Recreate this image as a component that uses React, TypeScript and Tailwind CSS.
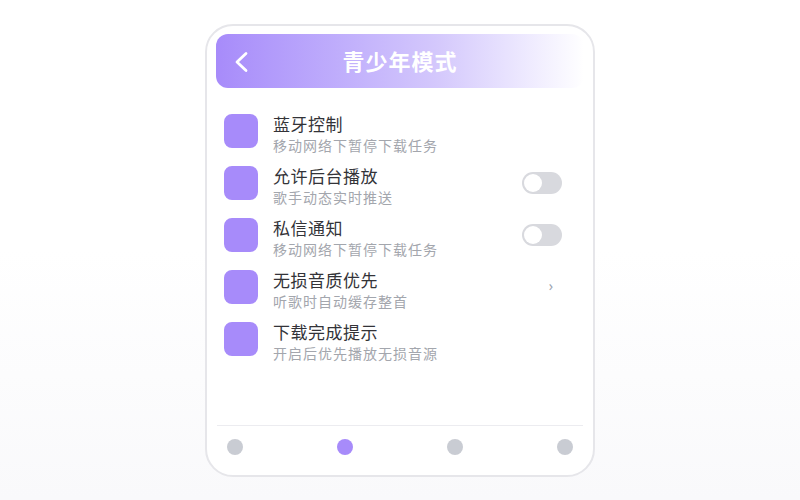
import React from "react";

const rows = [
  { t: "蓝牙控制", s: "移动网络下暂停下载任务", r: "none" },
  { t: "允许后台播放", s: "歌手动态实时推送", r: "toggle" },
  { t: "私信通知", s: "移动网络下暂停下载任务", r: "toggle" },
  { t: "无损音质优先", s: "听歌时自动缓存整首", r: "chevron" },
  { t: "下载完成提示", s: "开启后优先播放无损音源", r: "none" },
];

export default function App() {
  return (
    <div
      className="w-[800px] h-[500px] flex items-start justify-center pt-[24px] bg-gradient-to-b from-white from-50% to-[#f9f9fb]"
      style={{ fontFamily: '"Noto Sans", "Noto Sans CJK SC", sans-serif' }}
    >
      <div className="w-[390px] h-[453px] rounded-[28px] border-2 border-[#e6e6ea] bg-white pt-[8px] px-[9px] pb-[9px] flex flex-col">
        <div className="h-[54px] shrink-0 rounded-[12px] bg-gradient-to-r from-[#a78bfa] via-[#d4c8fc] via-60% to-white relative flex items-center justify-center">
          <svg
            className="absolute left-[17px] top-[17px]"
            width="16"
            height="22"
            viewBox="0 0 16 22"
            fill="none"
            stroke="white"
            strokeWidth="2.8"
            strokeLinecap="round"
            strokeLinejoin="round"
          >
            <path d="M13 2.5 L4 11 L13 19.5" />
          </svg>
          <span className="text-white text-[22px] font-bold tracking-[1px]">青少年模式</span>
        </div>
        <div className="mt-[17px] flex flex-col pl-[8px] pr-[6px]">
          {rows.map((r, i) => (
            <div key={i} className="h-[52px] flex items-start pt-[9px]">
              <div className="w-[34px] h-[34px] rounded-[8px] bg-[#a78bfa] shrink-0" />
              <div className="ml-[15px] flex-1 flex flex-col">
                <span className="text-[17px] leading-[22px] tracking-[0.5px] text-[#333338]">{r.t}</span>
                <span className="text-[14px] leading-[20px] tracking-[1px] text-[#a3a6ad]">{r.s}</span>
              </div>
              {r.r === "toggle" && (
                <div className="mt-[6px] mr-[16px] w-[40px] h-[22px] rounded-full bg-[#d8d9de] p-[2px] flex items-center">
                  <div className="w-[18px] h-[18px] rounded-full bg-white" />
                </div>
              )}
              {r.r === "chevron" && (
                <span className="mt-[8px] mr-[25px] text-[14px] text-[#9ca3af] leading-[16px]">›</span>
              )}
            </div>
          ))}
        </div>
        <div className="flex-1" />
        <div className="border-t border-[#ececf0] mx-[1px] pt-[13px] pb-[11px] px-[10px] flex justify-between">
          <div className="w-[16px] h-[16px] rounded-full bg-[#c9ccd3]" />
          <div className="w-[16px] h-[16px] rounded-full bg-[#a78bfa]" />
          <div className="w-[16px] h-[16px] rounded-full bg-[#c9ccd3]" />
          <div className="w-[16px] h-[16px] rounded-full bg-[#c9ccd3]" />
        </div>
      </div>
    </div>
  );
}
